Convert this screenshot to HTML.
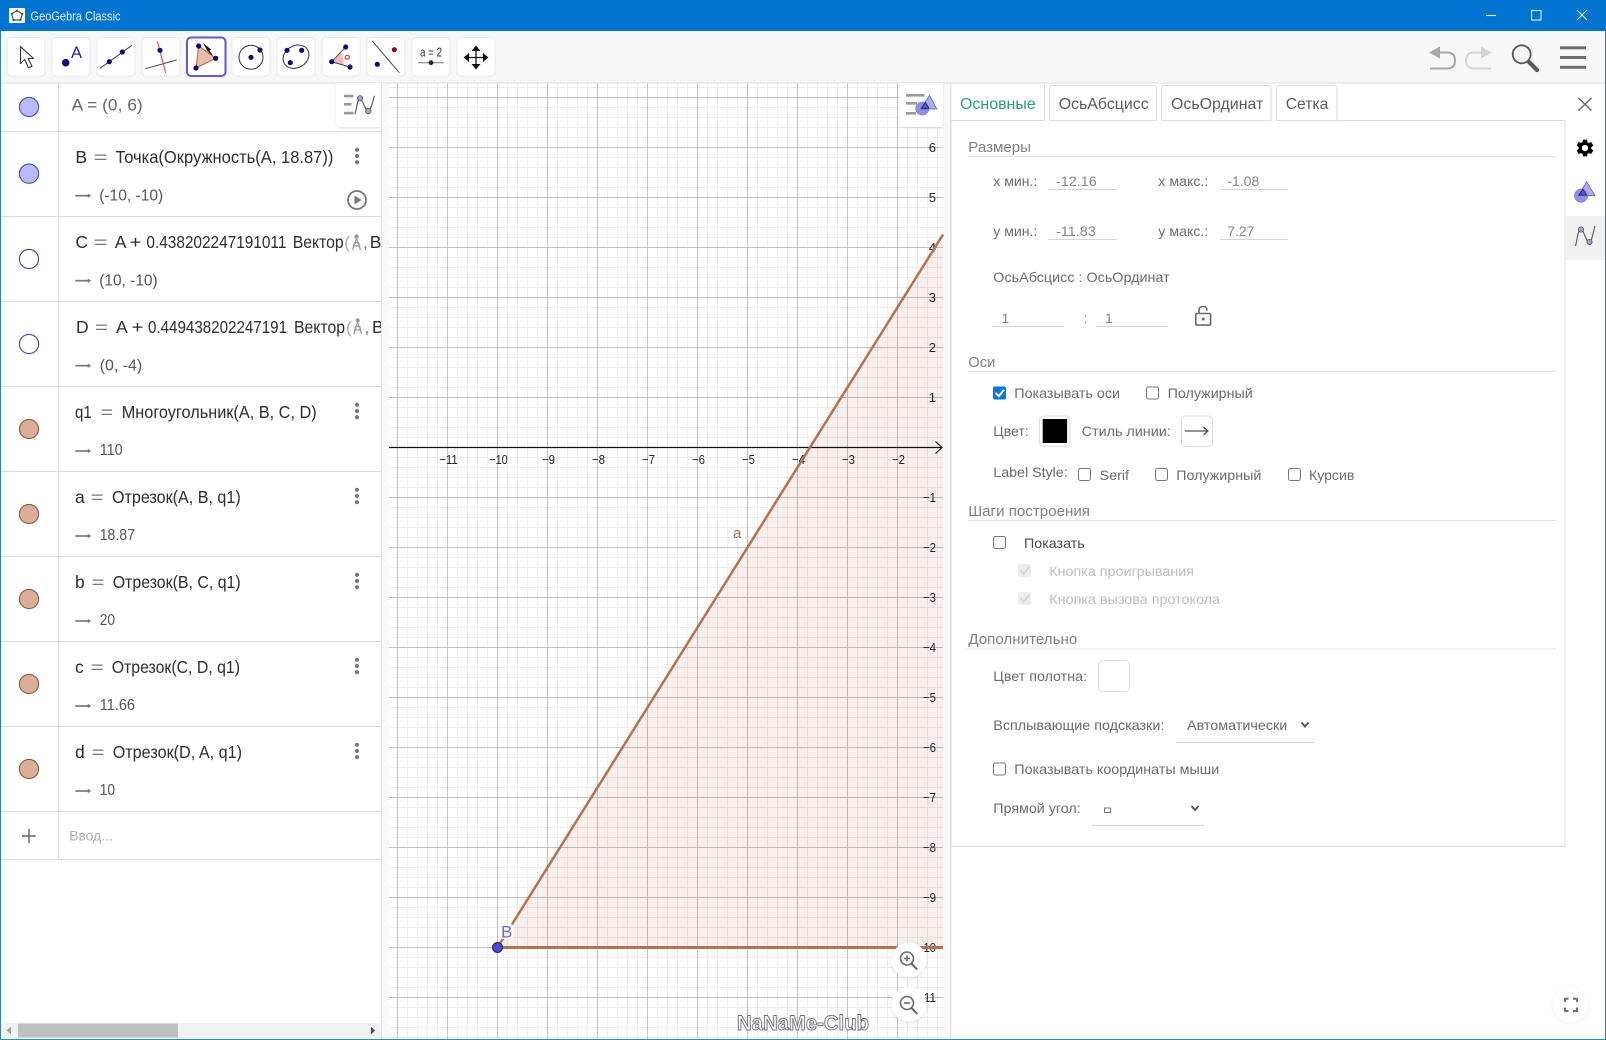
<!DOCTYPE html>
<html lang="ru"><head><meta charset="utf-8"><title>GeoGebra Classic</title>
<style>
html,body{margin:0;padding:0;background:#fff;width:1606px;height:1040px;overflow:hidden}
svg{display:block;position:absolute;left:0;top:0}
text{font-family:"Liberation Sans","Noto Sans CJK SC",sans-serif}
.m{font-size:17.5px;fill:#2e2e2e}
.g{font-size:17px;fill:#666}
.v{font-size:16px;fill:#555}
.e{font-size:17px;fill:#777}
.t{font-size:16px;fill:#5c5c5c}
.h{font-size:14.5px;fill:#808080}
.l{font-size:14px;fill:#6b6b6b}
.i{font-size:14px;fill:#868686}
.d{font-size:14px;fill:#bdbdbd}
.a{font-size:13px;fill:#222}
</style></head><body>
<svg width="1606" height="1040" viewBox="0 0 1606 1040" xmlns="http://www.w3.org/2000/svg">
<defs>
<pattern id="minor" patternUnits="userSpaceOnUse" x="387" y="87" width="10" height="10"><path d="M0 0H10V1H1V10H0Z" fill="#ececec"/></pattern>
<pattern id="major" patternUnits="userSpaceOnUse" x="397" y="97" width="50" height="50"><path d="M0 0H50V1H1V50H0Z" fill="#c2c2c2"/></pattern>
<g id="arr"><path d="M0 0H14.5" stroke="#777" stroke-width="1.7" fill="none"/><path d="M12.5-2.2L15.8 0L12.5 2.2Z" fill="#777"/></g>
<g id="dots" fill="#777"><circle cx="0" cy="-6.2" r="2.1"/><circle cx="0" cy="0" r="2.1"/><circle cx="0" cy="6.2" r="2.1"/></g>
<g id="comp" fill="none" stroke="#999" stroke-width="1.2"><circle cx="0" cy="-6.5" r="1.6" fill="#999"/><path d="M0-4.5L-4 7M0-4.5L4 7M-2-.5H2L3 3H-3Z"/></g>
<clipPath id="algclip"><rect x="0" y="83" width="381" height="780"/></clipPath>
</defs>

<!-- window -->
<rect width="1606" height="1040" fill="#fff"/>
<rect width="1606" height="31" fill="#0074d0"/>
<rect x="9" y="8" width="16" height="15" rx="1" fill="#fff"/>
<path d="M17 10.5L22.3 14L20.5 20H13.5L11.7 14Z" fill="none" stroke="#555" stroke-width="1.2"/>
<g fill="#555"><circle cx="17" cy="10.7" r="1.2"/><circle cx="22.2" cy="14" r="1.2"/><circle cx="20.5" cy="20" r="1.2"/><circle cx="13.5" cy="20" r="1.2"/><circle cx="11.8" cy="14" r="1.2"/></g>
<text x="30.5" y="20.3" font-size="12.5" fill="#e8f2fb" textLength="90" lengthAdjust="spacingAndGlyphs">GeoGebra Classic</text>
<g stroke="#e6f1fb" stroke-width="1.1" fill="none"><path d="M1486 15.5H1496"/><rect x="1531.5" y="10.5" width="9.5" height="9.5"/><path d="M1577 10L1587 20M1587 10L1577 20"/></g>

<!-- toolbar -->
<rect y="31" width="1606" height="52" fill="#f7f7f7"/>
<rect y="82.5" width="1606" height="1" fill="#dedede"/>
<g fill="#fff" stroke="#e8e8e8">
<rect x="7" y="37.5" width="38" height="38.5" rx="4"/><rect x="52" y="37.5" width="38" height="38.5" rx="4"/><rect x="97" y="37.5" width="38" height="38.5" rx="4"/><rect x="142" y="37.5" width="38" height="38.5" rx="4"/>
<rect x="232" y="37.5" width="38" height="38.5" rx="4"/><rect x="277" y="37.5" width="38" height="38.5" rx="4"/><rect x="322" y="37.5" width="38" height="38.5" rx="4"/><rect x="367" y="37.5" width="38" height="38.5" rx="4"/><rect x="412" y="37.5" width="38" height="38.5" rx="4"/><rect x="457" y="37.5" width="38" height="38.5" rx="4"/>
</g>
<rect x="187" y="37.5" width="38.5" height="38.5" rx="4" fill="#fff" stroke="#6557d2" stroke-width="2"/>
<!-- move -->
<path d="M20.5 46.5V63.5L24.7 59.5L28.5 67.8L32 66.2L28.2 58.5H33.5Z" fill="#fff" stroke="#333" stroke-width="1.1" stroke-linejoin="round"/>
<!-- point -->
<circle cx="65.7" cy="62.7" r="3.8" fill="#0b0b78"/><text x="71" y="58" font-size="16.5" fill="#2323b8">A</text>
<!-- line -->
<path d="M100 68.3L132 45.3" stroke="#444" stroke-width="1"/><circle cx="109.3" cy="61.7" r="2.6" fill="#0b0b78"/><circle cx="122.3" cy="52" r="2.6" fill="#0b0b78"/>
<!-- perp -->
<path d="M145.3 68.7L176.7 60" stroke="#444" stroke-width="1"/><path d="M157.3 41.3L165.7 72.7" stroke="#d83a4a" stroke-width="1"/><circle cx="160" cy="50.3" r="2.6" fill="#0b0b78"/>
<!-- polygon -->
<path d="M198.7 46L215.7 58.3L196 68Z" fill="#e9bda9" stroke="#a3755c" stroke-width="1.1"/>
<path d="M203 43L211 49.5L208 51.5Z" fill="#111"/><path d="M207 49L212 55" stroke="#111" stroke-width="1.4"/>
<circle cx="198.7" cy="46" r="2.6" fill="#0b0b78"/><circle cx="215.7" cy="58.3" r="2.6" fill="#0b0b78"/><circle cx="196" cy="68" r="2.6" fill="#0b0b78"/>
<!-- circle -->
<circle cx="251" cy="57.3" r="12" fill="none" stroke="#333" stroke-width="1"/><circle cx="251" cy="57.3" r="2.6" fill="#0b0b78"/><circle cx="260" cy="50" r="2.6" fill="#0b0b78"/>
<!-- conic -->
<ellipse cx="296" cy="56.7" rx="13.5" ry="11" transform="rotate(-30 296 56.7)" fill="none" stroke="#333" stroke-width="1"/><circle cx="287" cy="50.3" r="2.6" fill="#0b0b78"/><circle cx="301.7" cy="50.3" r="2.6" fill="#0b0b78"/><circle cx="290.3" cy="62.7" r="2.6" fill="#0b0b78"/>
<!-- angle -->
<path d="M331.7 61.7L340 53A12 12 0 0 1 343.2 65Z" fill="#f6b8b8"/>
<path d="M345.7 47L331.7 61.7L350 67" fill="none" stroke="#444" stroke-width="1"/>
<circle cx="331.7" cy="61.7" r="2.6" fill="#0b0b78"/><circle cx="345.7" cy="47" r="2.6" fill="#0b0b78"/><circle cx="350" cy="67" r="2.6" fill="#0b0b78"/>
<ellipse cx="347.3" cy="57.3" rx="2.2" ry="1.8" fill="none" stroke="#c83030" stroke-width="1.1"/>
<!-- reflect -->
<path d="M372.3 41L399.3 72.7" stroke="#444" stroke-width="1"/><circle cx="394.3" cy="49.7" r="2.6" fill="#8b1020"/><circle cx="377.3" cy="64.3" r="2.6" fill="#0b0b78"/>
<!-- slider -->
<text x="420" y="56.5" font-size="12.5" fill="#333" textLength="22" lengthAdjust="spacingAndGlyphs">a = 2</text>
<path d="M418.3 62.7H444" stroke="#777" stroke-width="1"/><circle cx="431" cy="62.7" r="2.4" fill="#222"/>
<!-- move view -->
<path d="M476 47V68M465.5 57.5H486.5" stroke="#111" stroke-width="1.3"/>
<path d="M476 45.5L480.5 51H471.5ZM476 69.5L480.5 64H471.5ZM463.5 57.5L469 53V62ZM488.5 57.5L483 53V62Z" fill="#111"/>
<!-- undo redo -->
<g fill="none" stroke="#a8a8a8" stroke-width="2"><path d="M1436 52.5H1447Q1455 52.5 1455 60.5Q1455 68.5 1447 68.5H1430"/></g><path d="M1429 52.5L1440 46.5V58.5Z" fill="#a8a8a8"/>
<g fill="none" stroke="#d4d4d4" stroke-width="2"><path d="M1485 52.5H1474Q1466 52.5 1466 60.5Q1466 68.5 1474 68.5H1491"/></g><path d="M1492 52.5L1481 46.5V58.5Z" fill="#d4d4d4"/>
<!-- search -->
<circle cx="1521.7" cy="54.3" r="9" fill="none" stroke="#5a5a5a" stroke-width="1.8"/><path d="M1529 62L1537 70" stroke="#5a5a5a" stroke-width="4.2" stroke-linecap="round"/>
<!-- menu -->
<g fill="#6e6e6e"><rect x="1560" y="46.3" width="26" height="3"/><rect x="1560" y="56" width="26" height="3"/><rect x="1560" y="65.8" width="26" height="3"/></g>

<!-- algebra panel -->
<rect x="1" y="83.5" width="380" height="955.5" fill="#fff"/>
<g fill="#dcdcdc"><rect x="58" y="83" width="1" height="777"/>
<rect x="1" y="131" width="380" height="1"/><rect x="1" y="216" width="380" height="1"/><rect x="1" y="301" width="380" height="1"/><rect x="1" y="386" width="380" height="1"/><rect x="1" y="471" width="380" height="1"/><rect x="1" y="556" width="380" height="1"/><rect x="1" y="641" width="380" height="1"/><rect x="1" y="726" width="380" height="1"/><rect x="1" y="811" width="380" height="1"/><rect x="1" y="859" width="380" height="1"/></g>
<g stroke-width="1.1">
<circle cx="29" cy="107" r="9.6" fill="#b9b9fa" stroke="#4b4bb0"/><circle cx="29" cy="173.7" r="9.6" fill="#b9b9fa" stroke="#4b4bb0"/>
<circle cx="29" cy="259" r="9.6" fill="#fff" stroke="#4040a8"/><circle cx="29" cy="344" r="9.6" fill="#fff" stroke="#4040a8"/>
<g fill="#daae97" stroke="#8a5c45"><circle cx="29" cy="429" r="9.6"/><circle cx="29" cy="514" r="9.6"/><circle cx="29" cy="599" r="9.6"/><circle cx="29" cy="684" r="9.6"/><circle cx="29" cy="769" r="9.6"/></g>
</g>
<g clip-path="url(#algclip)">
<text class="g" x="71.7" y="110.7" textLength="71" lengthAdjust="spacingAndGlyphs">A = (0, 6)</text>
<text class="m" x="75.4" y="163">B</text><text class="e" x="93.7" y="163" textLength="14" lengthAdjust="spacingAndGlyphs">=</text><text class="m" x="115.4" y="163" textLength="218" lengthAdjust="spacingAndGlyphs">Точка(Окружность(A, 18.87))</text>
<use href="#arr" x="75.3" y="195.7"/><text class="v" x="99.2" y="200.5" textLength="64" lengthAdjust="spacingAndGlyphs">(-10, -10)</text>
<text class="m" x="75.4" y="248">C</text><text class="e" x="93.7" y="248" textLength="14" lengthAdjust="spacingAndGlyphs">=</text><text class="m" x="114.7" y="248">A</text><text class="m" x="129.5" y="248" textLength="12" lengthAdjust="spacingAndGlyphs">+</text><text class="m" x="146.4" y="248" textLength="140" lengthAdjust="spacingAndGlyphs">0.438202247191011</text><text class="m" x="292.7" y="248" textLength="51" lengthAdjust="spacingAndGlyphs">Вектор</text><text class="e" x="344.3" y="248" style="fill:#aaa">(</text><use href="#comp" x="356.5" y="243"/><text class="e" x="363" y="248">,</text><text class="m" x="369.7" y="248">B</text>
<use href="#arr" x="75.3" y="280.7"/><text class="v" x="99.2" y="285.5" textLength="58.5" lengthAdjust="spacingAndGlyphs">(10, -10)</text>
<text class="m" x="76" y="333">D</text><text class="e" x="95" y="333" textLength="13" lengthAdjust="spacingAndGlyphs">=</text><text class="m" x="116" y="333">A</text><text class="m" x="131.5" y="333" textLength="12" lengthAdjust="spacingAndGlyphs">+</text><text class="m" x="148" y="333" textLength="139" lengthAdjust="spacingAndGlyphs">0.449438202247191</text><text class="m" x="294" y="333" textLength="51" lengthAdjust="spacingAndGlyphs">Вектор</text><text class="e" x="346" y="333" style="fill:#aaa">(</text><use href="#comp" x="357.7" y="327"/><text class="e" x="364.5" y="333">,</text><text class="m" x="372" y="333">B</text>
<use href="#arr" x="75.3" y="365.7"/><text class="v" x="99.7" y="370.5" textLength="42.5" lengthAdjust="spacingAndGlyphs">(0, -4)</text>
<text class="m" x="75" y="418" textLength="16.7" lengthAdjust="spacingAndGlyphs">q1</text><text class="e" x="100.7" y="418" textLength="12.5" lengthAdjust="spacingAndGlyphs">=</text><text class="m" x="121.7" y="418" textLength="195" lengthAdjust="spacingAndGlyphs">Многоугольник(A, B, C, D)</text>
<use href="#arr" x="75.3" y="451"/><text class="v" x="99.7" y="455.2" textLength="23" lengthAdjust="spacingAndGlyphs">110</text>
<text class="m" x="75" y="503">a</text><text class="e" x="90.7" y="503" textLength="13" lengthAdjust="spacingAndGlyphs">=</text><text class="m" x="112" y="503" textLength="128.7" lengthAdjust="spacingAndGlyphs">Отрезок(A, B, q1)</text>
<use href="#arr" x="75.3" y="536"/><text class="v" x="99.7" y="540.2" textLength="35.3" lengthAdjust="spacingAndGlyphs">18.87</text>
<text class="m" x="75" y="588">b</text><text class="e" x="91.5" y="588" textLength="13" lengthAdjust="spacingAndGlyphs">=</text><text class="m" x="112.7" y="588" textLength="128" lengthAdjust="spacingAndGlyphs">Отрезок(B, C, q1)</text>
<use href="#arr" x="75.3" y="621"/><text class="v" x="99.7" y="625.2" textLength="15.3" lengthAdjust="spacingAndGlyphs">20</text>
<text class="m" x="75" y="673">c</text><text class="e" x="90.7" y="673" textLength="13" lengthAdjust="spacingAndGlyphs">=</text><text class="m" x="111.7" y="673" textLength="128.3" lengthAdjust="spacingAndGlyphs">Отрезок(C, D, q1)</text>
<use href="#arr" x="75.3" y="706"/><text class="v" x="99.7" y="710.2" textLength="35.3" lengthAdjust="spacingAndGlyphs">11.66</text>
<text class="m" x="75" y="758">d</text><text class="e" x="91.5" y="758" textLength="13" lengthAdjust="spacingAndGlyphs">=</text><text class="m" x="112.7" y="758" textLength="129.3" lengthAdjust="spacingAndGlyphs">Отрезок(D, A, q1)</text>
<use href="#arr" x="75.3" y="791"/><text class="v" x="99.7" y="795.2" textLength="15.3" lengthAdjust="spacingAndGlyphs">10</text>
</g>
<use href="#dots" x="357" y="156"/><use href="#dots" x="357" y="411"/><use href="#dots" x="357" y="496"/><use href="#dots" x="357" y="581"/><use href="#dots" x="357" y="666"/><use href="#dots" x="357" y="751"/>
<circle cx="357" cy="200" r="9" fill="none" stroke="#777" stroke-width="1.8"/><path d="M354.5 195.5L361.5 200L354.5 204.5Z" fill="#777"/>
<path d="M22 836H35.7M29 829V843" stroke="#777" stroke-width="1.7"/>
<text class="i" x="69.3" y="840.3" textLength="43.4" lengthAdjust="spacingAndGlyphs" style="fill:#adadad">Ввод...</text>
<!-- alg stylebar -->
<path d="M336 83V122Q336 127 341 127H381V83Z" fill="#fff" style="filter:drop-shadow(0 1px 1px rgba(0,0,0,.12))"/>
<g fill="#999"><rect x="344" y="94.7" width="9.5" height="2.6"/><rect x="344" y="103" width="7.5" height="2.6"/><rect x="344" y="111.8" width="9.5" height="2.6"/></g>
<path d="M355 114.3C357 106 358 98 360 98.3C362 98.5 366 112 368.3 111C371 110 372.5 102 374.5 95.7" fill="none" stroke="#555" stroke-width="1.1"/>
<circle cx="360" cy="98.3" r="2.7" fill="#a3a3d6" stroke="#555" stroke-width=".8"/><circle cx="368.3" cy="111" r="2.7" fill="#a3a3d6" stroke="#555" stroke-width=".8"/>
<!-- scrollbar -->
<rect x="3" y="1023" width="378" height="15.5" fill="#f1f1f1"/><rect x="18" y="1023.5" width="160" height="14" fill="#bfbfbf"/>
<path d="M6.5 1030.5L11 1026.5V1034.5Z" fill="#a0a0a0"/><path d="M375 1030.5L371 1026.5V1034.5Z" fill="#505050"/>

<!-- splitters -->
<rect x="381" y="83.5" width="8" height="956" fill="#f8f8f8"/><rect x="381" y="83.5" width="1" height="956" fill="#e4e4e4"/>
<rect x="943" y="83.5" width="7" height="956" fill="#f8f8f8"/><rect x="950" y="83.5" width="1.5" height="956" fill="#e6e6e6"/>

<!-- graphics -->
<rect x="389" y="83.5" width="554" height="955.5" fill="#fff"/>
<rect x="389" y="83.5" width="554" height="955.5" fill="url(#minor)"/>
<rect x="389" y="83.5" width="554" height="955.5" fill="url(#major)"/>
<path d="M497.5 947.5L943 235V947.5Z" fill="#b5704c" fill-opacity=".11"/>
<path d="M389 447.5H942" stroke="#111" stroke-width="1.3"/><path d="M935.5 441.5L942 447.5L935.5 453.5" fill="none" stroke="#111" stroke-width="1.1"/>
<g text-anchor="middle">
<text class="a" x="448.5" y="464.2" textLength="18.5" lengthAdjust="spacingAndGlyphs">−11</text><text class="a" x="498.5" y="464.2" textLength="18.5" lengthAdjust="spacingAndGlyphs">−10</text><text class="a" x="548.5" y="464.2" textLength="13" lengthAdjust="spacingAndGlyphs">−9</text><text class="a" x="598.5" y="464.2" textLength="13" lengthAdjust="spacingAndGlyphs">−8</text><text class="a" x="648.5" y="464.2" textLength="13" lengthAdjust="spacingAndGlyphs">−7</text><text class="a" x="698.5" y="464.2" textLength="13" lengthAdjust="spacingAndGlyphs">−6</text><text class="a" x="748.5" y="464.2" textLength="13" lengthAdjust="spacingAndGlyphs">−5</text><text class="a" x="798.5" y="464.2" textLength="13" lengthAdjust="spacingAndGlyphs">−4</text><text class="a" x="848.5" y="464.2" textLength="13" lengthAdjust="spacingAndGlyphs">−3</text><text class="a" x="898.5" y="464.2" textLength="13" lengthAdjust="spacingAndGlyphs">−2</text>
</g>
<g text-anchor="end">
<text class="a" x="936" y="152">6</text><text class="a" x="936" y="202">5</text><text class="a" x="936" y="252">4</text><text class="a" x="936" y="302">3</text><text class="a" x="936" y="352">2</text><text class="a" x="936" y="402">1</text>
<text class="a" x="936" y="502" textLength="13" lengthAdjust="spacingAndGlyphs">−1</text><text class="a" x="936" y="552" textLength="13" lengthAdjust="spacingAndGlyphs">−2</text><text class="a" x="936" y="602" textLength="13" lengthAdjust="spacingAndGlyphs">−3</text><text class="a" x="936" y="652" textLength="13" lengthAdjust="spacingAndGlyphs">−4</text><text class="a" x="936" y="702" textLength="13" lengthAdjust="spacingAndGlyphs">−5</text><text class="a" x="936" y="752" textLength="13" lengthAdjust="spacingAndGlyphs">−6</text><text class="a" x="936" y="802" textLength="13" lengthAdjust="spacingAndGlyphs">−7</text><text class="a" x="936" y="852" textLength="13" lengthAdjust="spacingAndGlyphs">−8</text><text class="a" x="936" y="902" textLength="13" lengthAdjust="spacingAndGlyphs">−9</text><text class="a" x="936" y="952" textLength="19" lengthAdjust="spacingAndGlyphs">−10</text><text class="a" x="936" y="1002" textLength="19" lengthAdjust="spacingAndGlyphs">−11</text>
</g>
<path d="M497.5 947.5L943 234.5" stroke="#b5714d" stroke-width="2.5" fill="none"/>
<path d="M497.5 947.5H943" stroke="#b5704c" stroke-width="3" fill="none"/>
<text x="733" y="538" font-size="15" fill="#a36f52">a</text>
<rect x="499.5" y="924" width="14" height="15" rx="3" fill="#fff" fill-opacity=".85"/>
<text x="501" y="937.3" font-size="17" fill="#6a6add">B</text>
<circle cx="497.5" cy="947.5" r="5" fill="#4848e0" stroke="#20205a" stroke-width="1"/>
<!-- graphics stylebar -->
<path d="M898.6 83V122Q898.6 127 903.6 127H943V83Z" fill="#fff" style="filter:drop-shadow(0 1px 1px rgba(0,0,0,.12))"/>
<g fill="#9a9a9a"><rect x="906" y="94" width="18.6" height="2.6"/><rect x="906" y="102" width="11" height="2.6"/><rect x="906" y="112" width="10" height="2.6"/></g>
<circle cx="922.3" cy="108.5" r="6.6" fill="#8f8fe4" stroke="#8080c8" stroke-width=".6"/>
<path d="M929.5 95.3L936.8 109H920.8Z" fill="#9696e8" fill-opacity=".8" stroke="#6262b4" stroke-width=".8"/>
<path d="M925.5 102.5L929 108.5H921.5Z" fill="#5858b8" stroke="#22227a" stroke-width=".8"/>
<!-- zoom -->
<g fill="#fff" style="filter:drop-shadow(0 1.5px 2.5px rgba(0,0,0,.12))"><circle cx="909" cy="960" r="17.5"/><circle cx="909" cy="1004" r="17.5"/></g>
<g fill="none" stroke="#6a6a6a" stroke-width="1.6"><circle cx="907" cy="958.5" r="6.5"/><path d="M904 958.5H910M907 955.5V961.5"/><circle cx="907" cy="1003" r="6.5"/><path d="M904 1003H910"/></g>
<path d="M911.5 963.5L916.5 968.8M911.5 1008L916.5 1013.3" stroke="#6a6a6a" stroke-width="2.2" stroke-linecap="round"/>
<text x="737" y="1030" font-size="21" font-weight="bold" fill="#fff" stroke="#6f6f6f" stroke-width=".9" textLength="132" lengthAdjust="spacingAndGlyphs">NaNaMe-Club</text>

<!-- properties -->
<rect x="951.5" y="83.5" width="654" height="956" fill="#fff"/>
<rect x="950" y="83.5" width="1.5" height="956" fill="#e6e6e6"/>
<path d="M951 120.5H1045M1337.5 120.5H1565" stroke="#dcdcdc"/>
<path d="M1049.5 120.5V88Q1049.5 85.5 1052 85.5H1154Q1156.5 85.5 1156.5 88V120.5H1049.5ZM1161.5 120.5V88Q1161.5 85.5 1164 85.5H1268.5Q1271 85.5 1271 88V120.5H1161.5ZM1276.5 120.5V88Q1276.5 85.5 1279 85.5H1334.5Q1337 85.5 1337 88V120.5H1276.5Z" fill="#fff" stroke="#dedede"/>
<path d="M1044.5 85V120.5" stroke="#dedede"/>
<path d="M951 120.5V846.5H1565V120.5" fill="none" stroke="#dcdcdc"/>
<text x="960" y="109" font-size="16" fill="#2a9c82" textLength="75.7" lengthAdjust="spacingAndGlyphs">Основные</text>
<text class="t" x="1058.7" y="109" textLength="90" lengthAdjust="spacingAndGlyphs">ОсьАбсцисс</text>
<text class="t" x="1171" y="109" textLength="92.3" lengthAdjust="spacingAndGlyphs">ОсьОрдинат</text>
<text class="t" x="1285.7" y="109" textLength="42.6" lengthAdjust="spacingAndGlyphs">Сетка</text>
<!-- sidebar -->
<path d="M1578.5 98L1591.5 110.5M1591.5 98L1578.5 110.5" stroke="#6a6a6a" stroke-width="1.5"/>
<path transform="translate(1574.5 137.5) scale(.875)" fill="#000" d="M19.14 12.94c.04-.3.06-.61.06-.94 0-.32-.02-.64-.07-.94l2.03-1.58c.18-.14.23-.41.12-.61l-1.92-3.32c-.12-.22-.37-.29-.59-.22l-2.39.96c-.5-.38-1.03-.7-1.62-.94l-.36-2.54c-.04-.24-.24-.41-.48-.41h-3.84c-.24 0-.43.17-.47.41l-.36 2.54c-.59.24-1.13.57-1.62.94l-2.39-.96c-.22-.08-.47 0-.59.22L2.74 8.87c-.12.21-.08.47.12.61l2.03 1.58c-.05.3-.09.63-.09.94s.02.64.07.94l-2.03 1.58c-.18.14-.23.41-.12.61l1.92 3.32c.12.22.37.29.59.22l2.39-.96c.5.38 1.03.7 1.62.94l.36 2.54c.05.24.24.41.48.41h3.84c.24 0 .44-.17.47-.41l.36-2.54c.59-.24 1.13-.56 1.62-.94l2.39.96c.22.08.47 0 .59-.22l1.92-3.32c.12-.22.07-.47-.12-.61l-2.01-1.58zM12 15.6c-1.98 0-3.6-1.62-3.6-3.6s1.62-3.6 3.6-3.6 3.6 1.62 3.6 3.6-1.62 3.6-3.6 3.6z"/>
<circle cx="1581" cy="195.7" r="6.6" fill="#8f8fe4" stroke="#8080c8" stroke-width=".6"/>
<path d="M1586.7 181.7L1595 195.7H1578.3Z" fill="#9696e8" fill-opacity=".8" stroke="#6262b4" stroke-width=".8"/>
<path d="M1583 189L1586.5 195H1579Z" fill="#5858b8" stroke="#22227a" stroke-width=".8"/>
<rect x="1566" y="216" width="39" height="44" fill="#f0f0f0"/>
<path d="M1575.5 246C1577.5 238 1578 229.5 1581 229.5C1584 229.5 1586 243 1589.5 242C1592 241 1593 233 1595 226" fill="none" stroke="#555" stroke-width="1.1"/>
<circle cx="1581" cy="229.5" r="2.6" fill="#a3a3d6" stroke="#555" stroke-width=".8"/><circle cx="1589.5" cy="242" r="2.6" fill="#a3a3d6" stroke="#555" stroke-width=".8"/>

<!-- headings -->
<g fill="#e4e4e4"><rect x="968" y="156" width="588" height="1"/><rect x="968" y="371" width="588" height="1"/><rect x="968" y="520" width="588" height="1"/><rect x="966" y="648.5" width="590" height="1"/></g>
<text class="h" x="968.3" y="152" textLength="62.7" lengthAdjust="spacingAndGlyphs">Размеры</text>
<text class="h" x="968.3" y="367" textLength="27" lengthAdjust="spacingAndGlyphs">Оси</text>
<text class="h" x="968.3" y="516" textLength="121.7" lengthAdjust="spacingAndGlyphs">Шаги построения</text>
<text class="h" x="968.3" y="644" textLength="109" lengthAdjust="spacingAndGlyphs">Дополнительно</text>
<!-- size fields -->
<text class="l" x="993.3" y="186" textLength="44" lengthAdjust="spacingAndGlyphs">x мин.:</text>
<text class="l" x="1158.3" y="186" textLength="50" lengthAdjust="spacingAndGlyphs">x макс.:</text>
<text class="l" x="993.3" y="236" textLength="44" lengthAdjust="spacingAndGlyphs">y мин.:</text>
<text class="l" x="1158.3" y="236" textLength="50" lengthAdjust="spacingAndGlyphs">y макс.:</text>
<text class="i" x="1056" y="186" textLength="40.7" lengthAdjust="spacingAndGlyphs">-12.16</text>
<text class="i" x="1227.3" y="186" textLength="32" lengthAdjust="spacingAndGlyphs">-1.08</text>
<text class="i" x="1056" y="236" textLength="39.7" lengthAdjust="spacingAndGlyphs">-11.83</text>
<text class="i" x="1227.3" y="236" textLength="27" lengthAdjust="spacingAndGlyphs">7.27</text>
<g fill="#d4d4d4"><rect x="1048" y="189" width="69" height="1"/><rect x="1220" y="189" width="68" height="1"/><rect x="1048" y="239" width="69" height="1"/><rect x="1220" y="239" width="68" height="1"/><rect x="992" y="326" width="72" height="1"/><rect x="1096" y="326" width="72" height="1"/><rect x="1176" y="742" width="138" height="1"/><rect x="1092" y="825" width="112" height="1"/></g>
<text class="l" x="993.3" y="282" textLength="176.4" lengthAdjust="spacingAndGlyphs">ОсьАбсцисс : ОсьОрдинат</text>
<text class="i" x="1001.5" y="323">1</text><text class="i" x="1083.5" y="323">:</text><text class="i" x="1105" y="323">1</text>
<g fill="none" stroke="#6a6a6a" stroke-width="1.6"><rect x="1195.8" y="313.5" width="14.8" height="11.6" rx="1.2"/><path d="M1199 313V310.5Q1199 306.5 1203 306.5Q1207 306.5 1207 310.5"/></g><circle cx="1203.2" cy="319" r="1.5" fill="#6a6a6a"/>
<!-- axes -->
<rect x="993" y="386.5" width="13" height="13" rx="2" fill="#0a75e6"/><path d="M995.5 393L998.8 396.2L1004 389.8" fill="none" stroke="#fff" stroke-width="2"/>
<text class="l" x="1014.3" y="398" textLength="105.7" lengthAdjust="spacingAndGlyphs">Показывать оси</text>
<g fill="#fff" stroke="#777" stroke-width="1"><rect x="1146.5" y="387" width="12" height="12" rx="2"/><rect x="1078.5" y="468.5" width="12" height="12" rx="2"/><rect x="1155.5" y="468.5" width="12" height="12" rx="2"/><rect x="1288.5" y="468.5" width="12" height="12" rx="2"/><rect x="993.5" y="536.5" width="12" height="12" rx="2"/><rect x="993.5" y="763" width="12" height="12" rx="2"/></g>
<text class="l" x="1167.7" y="398" textLength="85" lengthAdjust="spacingAndGlyphs">Полужирный</text>
<text class="l" x="993.3" y="436" textLength="35.4" lengthAdjust="spacingAndGlyphs">Цвет:</text>
<rect x="1039.5" y="416" width="30.5" height="30.5" rx="4" fill="#fff" stroke="#dedede"/><rect x="1042.7" y="419" width="24.4" height="24" fill="#000"/>
<text class="l" x="1081.7" y="436" textLength="89" lengthAdjust="spacingAndGlyphs">Стиль линии:</text>
<rect x="1181.5" y="416" width="31" height="30.5" rx="4" fill="#fff" stroke="#dedede"/><path d="M1185 431H1208M1203.5 427L1208 431L1203.5 435" fill="none" stroke="#555" stroke-width="1.2"/>
<text class="l" x="993.3" y="477" textLength="74.4" lengthAdjust="spacingAndGlyphs">Label Style:</text>
<text class="l" x="1099.7" y="480" textLength="29.3" lengthAdjust="spacingAndGlyphs">Serif</text>
<text class="l" x="1176.3" y="480" textLength="85" lengthAdjust="spacingAndGlyphs">Полужирный</text>
<text class="l" x="1309" y="480" textLength="45.3" lengthAdjust="spacingAndGlyphs">Курсив</text>
<!-- construction steps -->
<text class="l" x="1024" y="548" textLength="60.7" lengthAdjust="spacingAndGlyphs" style="fill:#4a4a4a">Показать</text>
<g fill="#ececec"><rect x="1018" y="564" width="13" height="13" rx="2"/><rect x="1018" y="592" width="13" height="13" rx="2"/></g>
<path d="M1020.5 570.5L1023.8 573.8L1029 567.3M1020.5 598.5L1023.8 601.8L1029 595.3" fill="none" stroke="#d6d6d6" stroke-width="1.8"/>
<text class="d" x="1049.3" y="576" textLength="144.7" lengthAdjust="spacingAndGlyphs">Кнопка проигрывания</text>
<text class="d" x="1049.3" y="604" textLength="170.7" lengthAdjust="spacingAndGlyphs">Кнопка вызова протокола</text>
<!-- advanced -->
<text class="l" x="993.3" y="681" textLength="93.7" lengthAdjust="spacingAndGlyphs">Цвет полотна:</text>
<rect x="1098.5" y="660.5" width="31" height="31" rx="4" fill="#fff" stroke="#dedede"/>
<text class="l" x="993.3" y="730" textLength="171" lengthAdjust="spacingAndGlyphs">Всплывающие подсказки:</text>
<text class="l" x="1187" y="730" textLength="100.3" lengthAdjust="spacingAndGlyphs">Автоматически</text>
<path d="M1301.5 722.5L1305 726.5L1308.5 722.5M1191.5 806L1195 810L1198.5 806" fill="none" stroke="#555" stroke-width="1.9"/>
<text class="l" x="1014.3" y="774" textLength="205" lengthAdjust="spacingAndGlyphs">Показывать координаты мыши</text>
<text class="l" x="993.3" y="813" textLength="87.4" lengthAdjust="spacingAndGlyphs">Прямой угол:</text>
<rect x="1104.5" y="808" width="6" height="4.5" fill="none" stroke="#666" stroke-width=".9"/>
<!-- fullscreen -->
<circle cx="1570.3" cy="1005" r="17.5" fill="#fff" style="filter:drop-shadow(0 1px 2px rgba(0,0,0,.06))"/>
<path d="M1565 1002V998.7H1568.5M1573 998.7H1577V1002M1577 1007.5V1011H1573M1568.5 1011H1565V1007.5" fill="none" stroke="#707070" stroke-width="2"/>
<!-- window border -->
<rect x="0" y="31" width="1" height="1009" fill="#2c82c4"/><rect x="1605" y="31" width="1" height="1009" fill="#2c82c4"/><rect x="0" y="1039" width="1606" height="1" fill="#2a93ac"/>
</svg>
</body></html>
